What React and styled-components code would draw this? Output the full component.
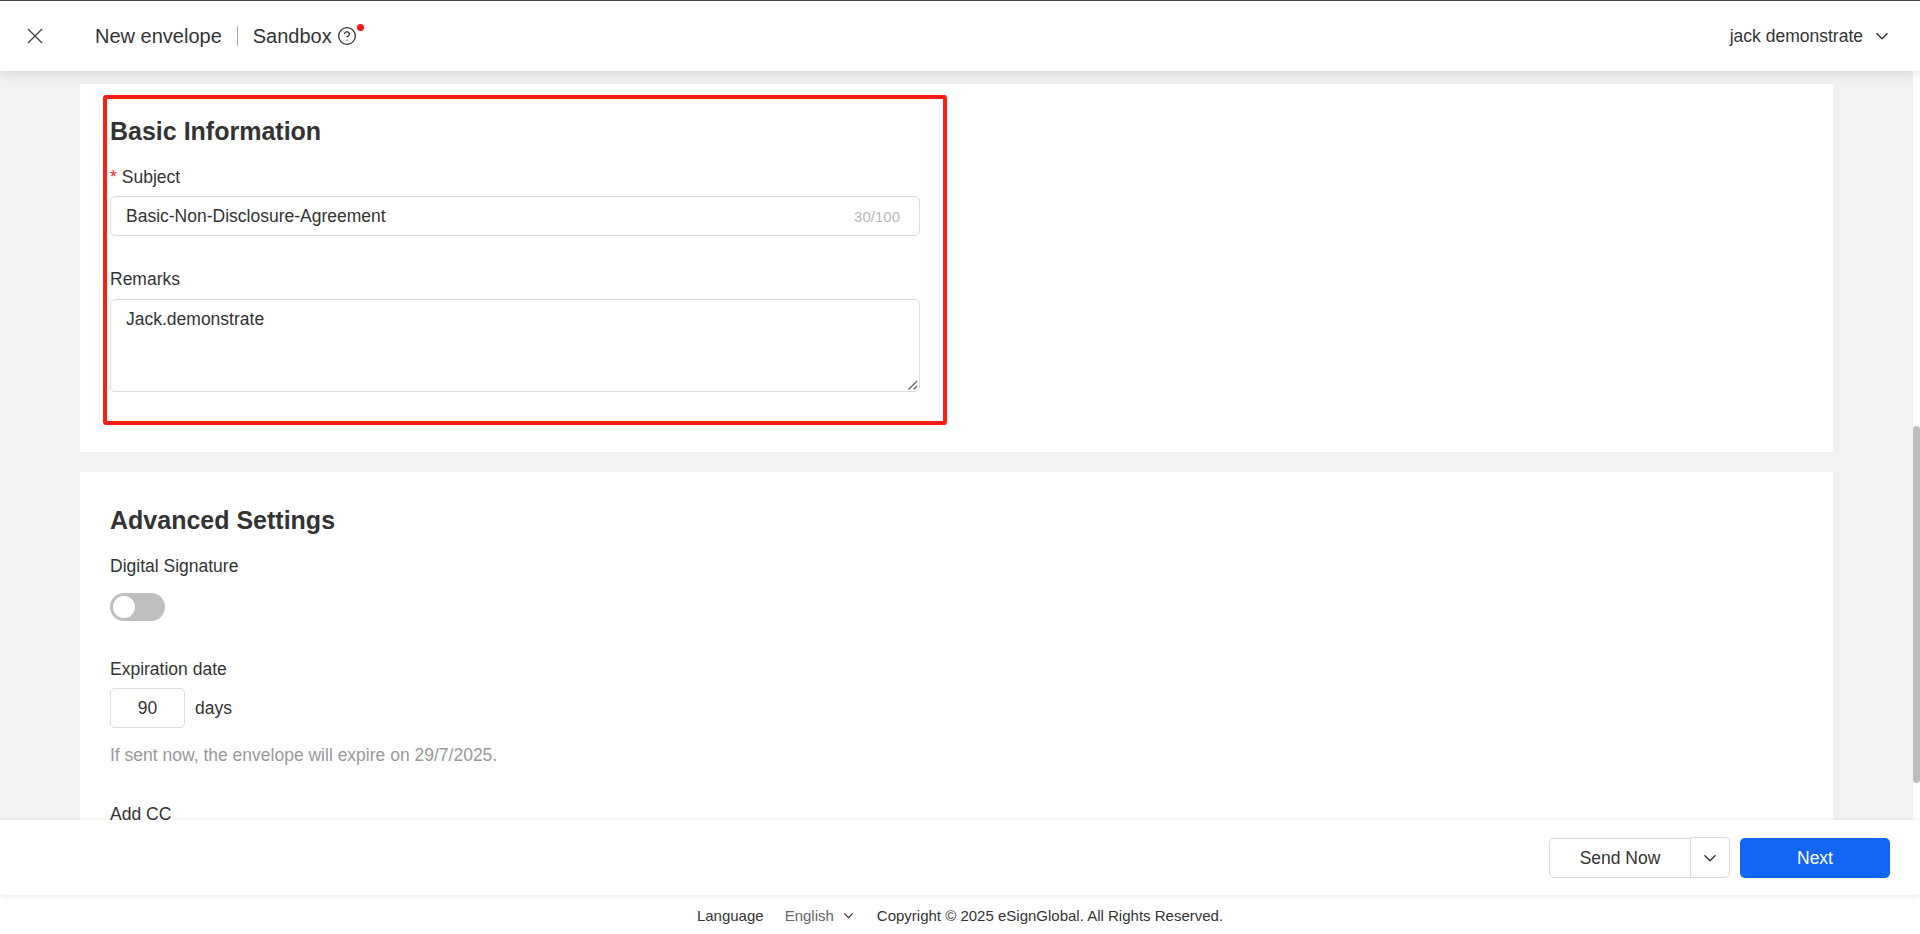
import React from 'react';
import styled, { createGlobalStyle } from 'styled-components';
import { CircleHelp } from 'lucide-react';

const GlobalStyle = createGlobalStyle`
  html, body {
    margin: 0;
    padding: 0;
    height: 100%;
    overflow: hidden;
    background: #fff;
    font-family: 'Liberation Sans', Arial, sans-serif;
    color: #333;
  }
  * { box-sizing: border-box; }
`
const Chevron = ({ size = 14, stroke = '#333' }) => (
  <svg width={size} height={size} viewBox="0 0 14 14" fill="none" stroke={stroke} strokeWidth="1.4">
    <path d="M1.5 4.2 7 9.8l5.5-5.6" />
  </svg>
)
const CloseIcon = () => (
  <svg width="16" height="16" viewBox="0 0 16 16" fill="none" stroke="#444" strokeWidth="1.4">
    <path d="M1 1l14 14M15 1 1 15" />
  </svg>
)

export default function App() {
  return (
    <Page>
      <GlobalStyle />
      <Header>
        <CloseButton><CloseIcon /></CloseButton>
        <HeaderTitle>New envelope</HeaderTitle>
        <HeaderDivider />
        <HeaderTitle>Sandbox</HeaderTitle>
        <HelpWrap>
          <CircleHelp size={20} strokeWidth={1.6} color="#333" />
          <RedDot />
        </HelpWrap>
        <UserMenu>
          jack demonstrate
          <Chevron />
        </UserMenu>
      </Header>
      <Main>
        <Content>
          <Card $top={13} $height={368}>
            <Highlight>
              <SectionTitle>Basic Information</SectionTitle>
              <FieldLabel $top={21}><Star>*</Star>Subject</FieldLabel>
              <TextBox>
                <span>Basic-Non-Disclosure-Agreement</span>
                <Counter>30/100</Counter>
              </TextBox>
              <FieldLabel $top={33}>Remarks</FieldLabel>
              <RemarksBox>
                Jack.demonstrate
                <Grip width="10" height="10" viewBox="0 0 10 10" stroke="#6b5b55" strokeWidth="1.2">
                  <path d="M0.5 9.5 9 1M5.5 9.5 9 6" />
                </Grip>
              </RemarksBox>
            </Highlight>
          </Card>
          <Card $top={20}>
            <AdvancedBody>
              <SectionTitle>Advanced Settings</SectionTitle>
              <FieldLabel $top={21}>Digital Signature</FieldLabel>
              <Toggle><Knob /></Toggle>
              <FieldLabel $top={38}>Expiration date</FieldLabel>
              <DaysRow>
                <DaysBox>90</DaysBox>
                <span>days</span>
              </DaysRow>
              <Hint>If sent now, the envelope will expire on 29/7/2025.</Hint>
              <FieldLabel $top={39}>Add CC</FieldLabel>
            </AdvancedBody>
          </Card>
        </Content>
        <ScrollTrack><ScrollThumb /></ScrollTrack>
      </Main>
      <ActionBar>
        <SendButton>Send Now</SendButton>
        <SendMore><Chevron /></SendMore>
        <NextButton>Next</NextButton>
      </ActionBar>
      <Footer>
        <span>Language</span>
        <LangPicker>English <Chevron size={11} stroke="#333" /></LangPicker>
        <span>Copyright © 2025 eSignGlobal. All Rights Reserved.</span>
      </Footer>
    </Page>
  );
}

const Page = styled.div`
  height: 100vh;
  display: flex;
  flex-direction: column;
  overflow: hidden;
`
const Header = styled.header`
  flex: none;
  height: 71px;
  background: #fff;
  border-top: 1px solid #444;
  box-shadow: 0 2px 12px rgba(0,0,0,0.12);
  display: flex;
  align-items: center;
  padding: 0 31px 0 27px;
  position: relative;
  z-index: 2;
  font-size: 20px;
`
const CloseButton = styled.div`
  display: flex;
  width: 68px;
`
const HeaderTitle = styled.span`
  color: #333;
`
const HeaderDivider = styled.div`
  width: 1px;
  height: 20px;
  background: #aaa;
  margin: 0 15px;
`
const HelpWrap = styled.span`
  display: flex;
  margin-left: 5px;
  position: relative;
`
const RedDot = styled.i`
  position: absolute;
  top: -2px;
  right: -7px;
  width: 7px;
  height: 7px;
  border-radius: 50%;
  background: #f5141c;
`
const UserMenu = styled.div`
  margin-left: auto;
  display: flex;
  align-items: center;
  gap: 12px;
  font-size: 17.5px;
`
const Main = styled.main`
  flex: 1;
  min-height: 0;
  display: flex;
  overflow: hidden;
`
const Content = styled.div`
  flex: 1;
  min-width: 0;
  background: #f1f2f4;
  padding: 0 80px;
  overflow: hidden;
`
const Card = styled.section`
  background: #fff;
  margin-top: ${p => p.$top}px;
  ${p => p.$height ? `height: ${p.$height}px;` : ''}
  padding-top: ${p => p.$height ? 11 : 0}px;
`
const Highlight = styled.div`
  width: 844px;
  height: 330px;
  margin-left: 23px;
  padding: 17px 0 0 3px;
  border: 4px solid #fb1f13;
  border-radius: 3px;
`
const AdvancedBody = styled.div`
  padding: 33px 0 0 30px;
  height: 400px;
`
const SectionTitle = styled.h2`
  margin: 0;
  font-size: 25px;
  line-height: 30px;
  font-weight: 700;
  color: #333;
`
const FieldLabel = styled.div`
  margin-top: ${p => p.$top}px;
  font-size: 17.5px;
  line-height: 20px;
`
const Star = styled.span`
  color: #f5222d;
  margin-right: 5px;
`
const TextBox = styled.div`
  margin-top: 9px;
  width: 810px;
  height: 40px;
  border: 1px solid #ddd;
  border-radius: 5px;
  padding: 0 19px 0 15px;
  display: flex;
  align-items: center;
  justify-content: space-between;
  font-size: 17.5px;
`
const Counter = styled.span`
  font-size: 15px;
  color: #bbb;
`
const RemarksBox = styled.div`
  position: relative;
  margin-top: 10px;
  width: 810px;
  height: 93px;
  border: 1px solid #ddd;
  border-radius: 5px;
  padding: 9px 15px;
  font-size: 17.5px;
  line-height: 20px;
`
const Grip = styled.svg`
  position: absolute;
  right: 1px;
  bottom: 1px;
`
const Toggle = styled.div`
  margin-top: 17px;
  width: 55px;
  height: 28px;
  border-radius: 14px;
  background: #bfbfbf;
  padding: 3px;
`
const Knob = styled.div`
  width: 22px;
  height: 22px;
  border-radius: 50%;
  background: #fff;
`
const DaysRow = styled.div`
  margin-top: 9px;
  display: flex;
  align-items: center;
  gap: 10px;
  font-size: 17.5px;
`
const DaysBox = styled.div`
  width: 75px;
  height: 40px;
  border: 1px solid #ddd;
  border-radius: 5px;
  display: flex;
  align-items: center;
  justify-content: center;
`
const Hint = styled.div`
  margin-top: 17px;
  font-size: 17.5px;
  line-height: 20px;
  color: #999;
`
const ScrollTrack = styled.div`
  flex: none;
  width: 7px;
  background: #fff;
`
const ScrollThumb = styled.div`
  margin-top: 355px;
  height: 357px;
  background: #bdbdbd;
  border-radius: 4px;
`
const ActionBar = styled.div`
  flex: none;
  height: 75px;
  background: #fff;
  display: flex;
  align-items: center;
  justify-content: flex-end;
  padding: 1px 30px 0 0;
  position: relative;
  z-index: 1;
  box-shadow: 0 1px 6px rgba(0,0,0,0.1);
  font-size: 17.5px;
`
const SendButton = styled.div`
  width: 142px;
  height: 40px;
  border: 1px solid #d9d9d9;
  border-radius: 5px 0 0 5px;
  display: flex;
  align-items: center;
  justify-content: center;
`
const SendMore = styled.div`
  width: 40px;
  height: 41px;
  margin: -1px 10px 0 -1px;
  border: 1px solid #d9d9d9;
  border-radius: 0 5px 5px 0;
  display: flex;
  align-items: center;
  justify-content: center;
`
const NextButton = styled.div`
  width: 150px;
  height: 40px;
  border-radius: 5px;
  background: #1166f5;
  color: #fff;
  display: flex;
  align-items: center;
  justify-content: center;
`
const Footer = styled.footer`
  flex: none;
  height: 39px;
  padding-top: 2px;
  background: #fff;
  display: flex;
  align-items: center;
  justify-content: center;
  font-size: 15px;
  gap: 21px;
`
const LangPicker = styled.span`
  display: flex;
  align-items: center;
  gap: 9px;
  color: #666;
  margin-right: 2px;
`
